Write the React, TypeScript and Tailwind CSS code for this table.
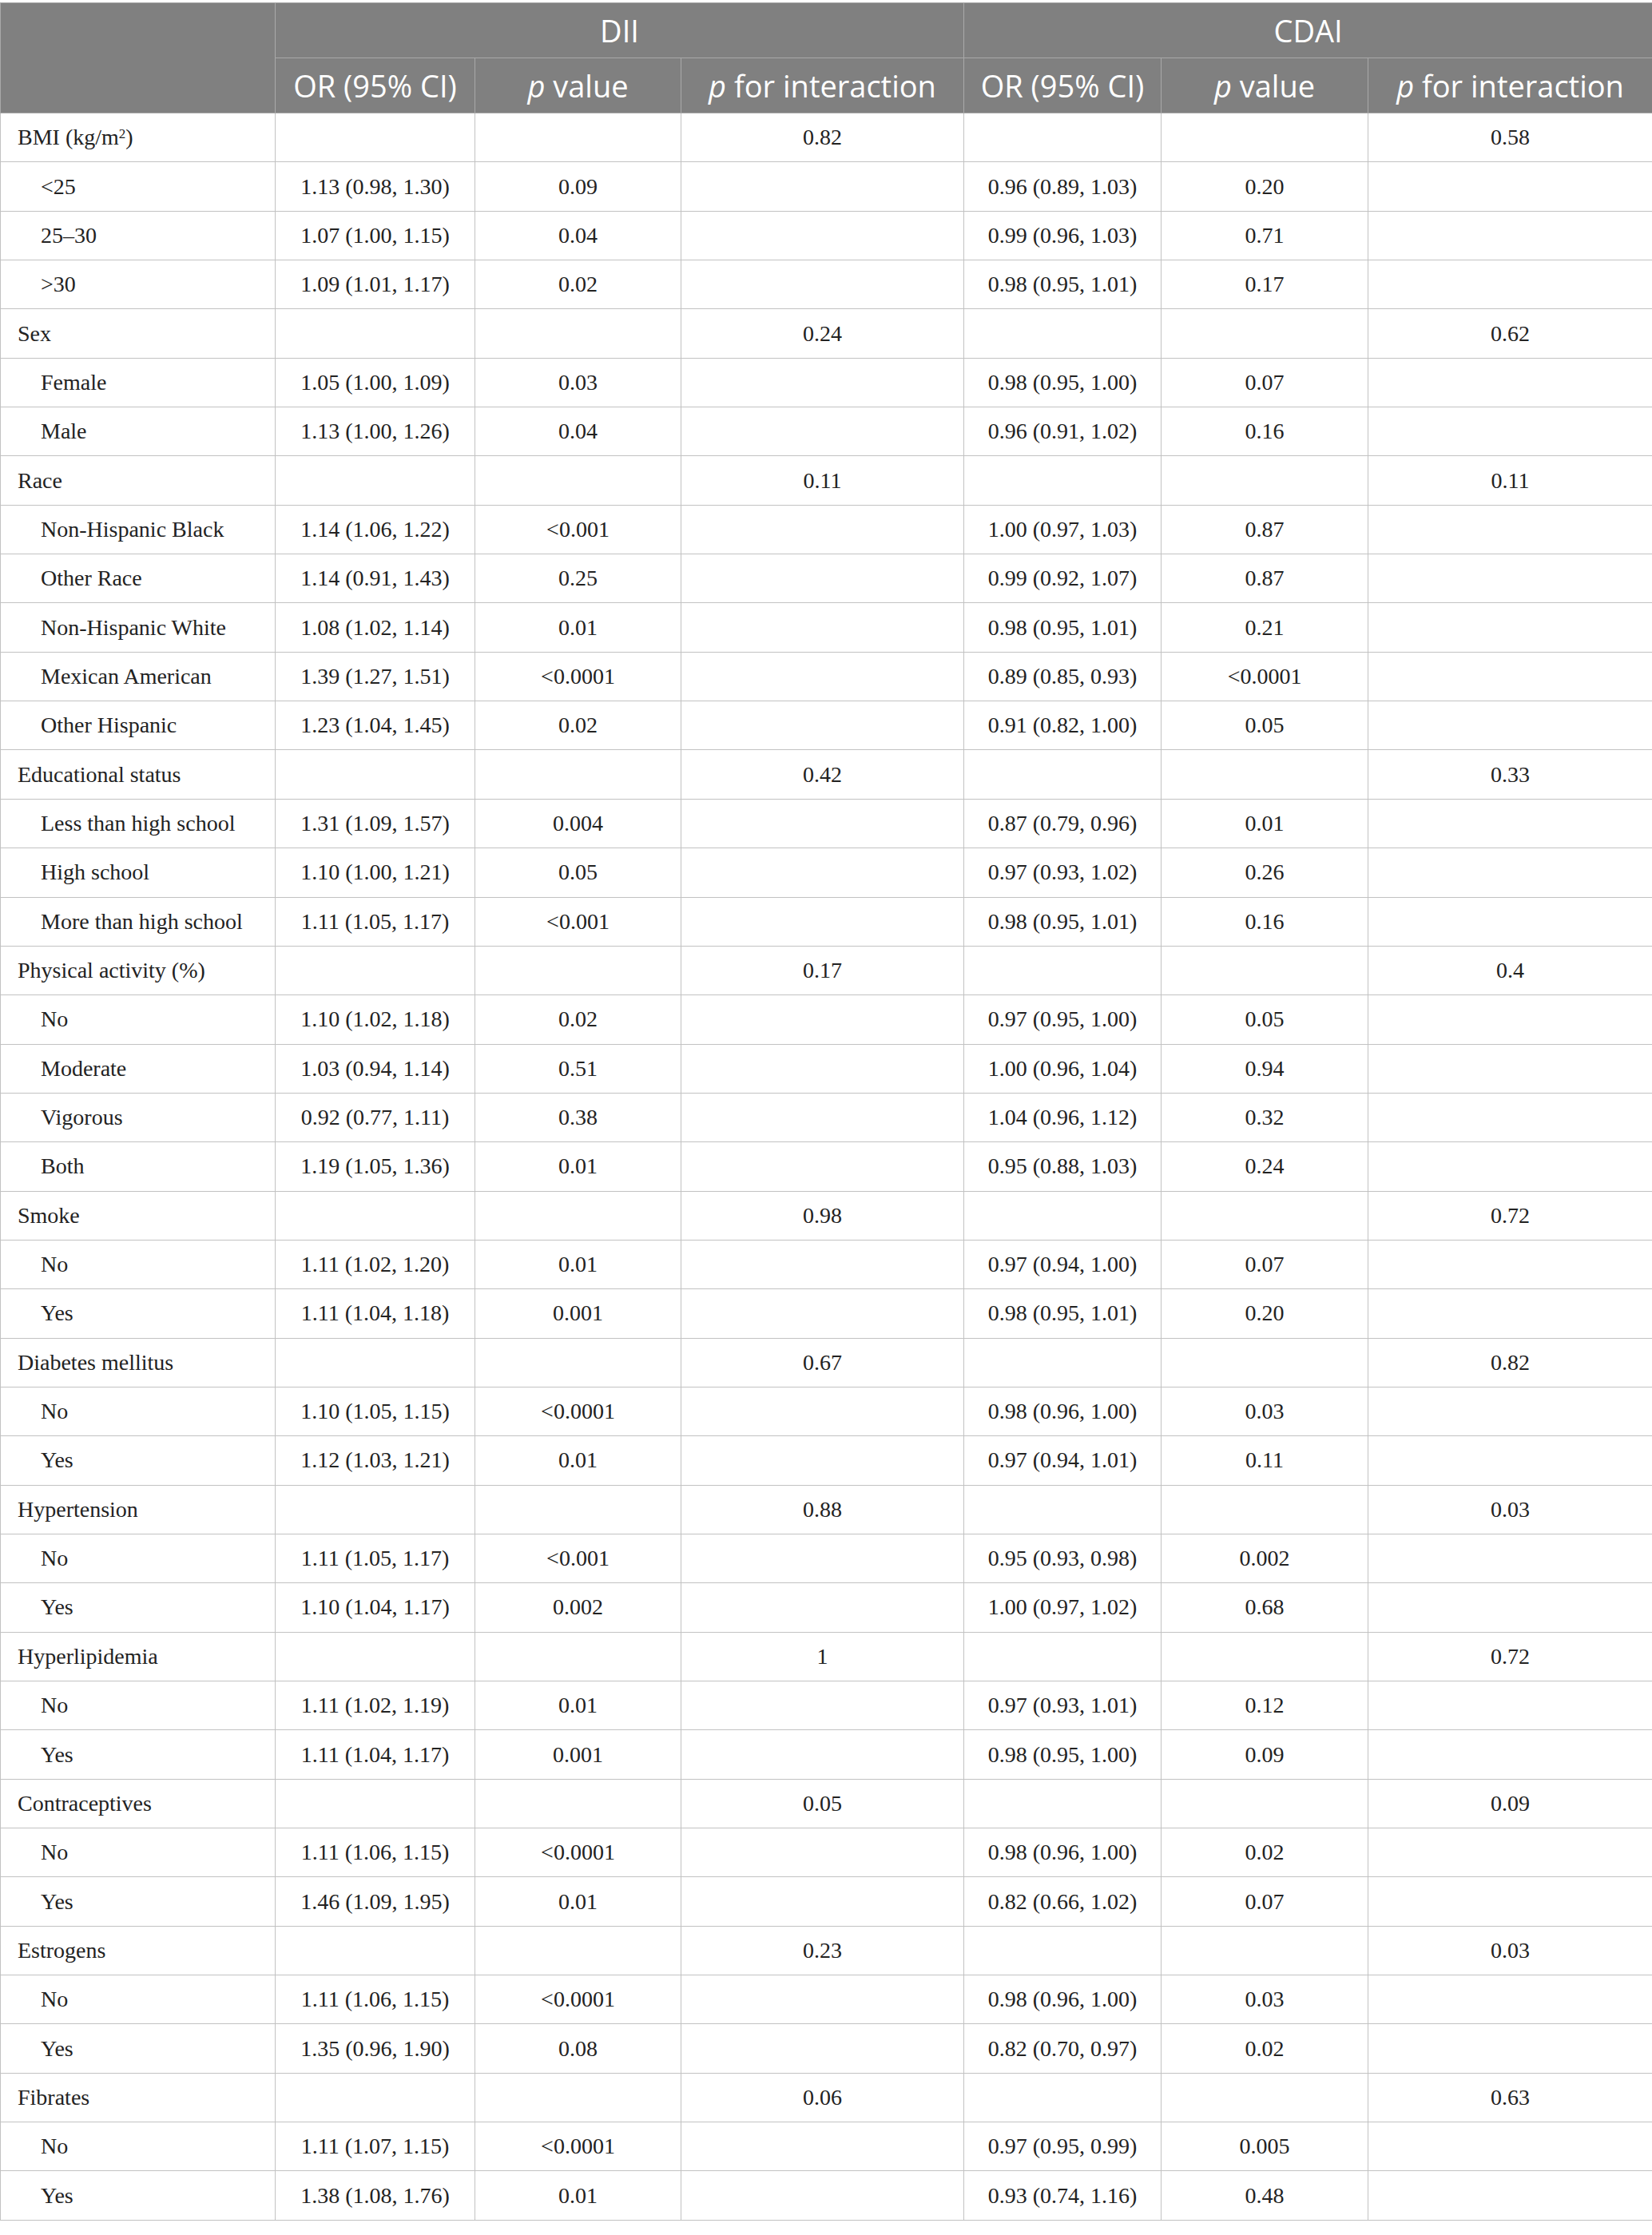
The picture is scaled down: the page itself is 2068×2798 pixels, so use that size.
const DATA: [string, boolean, string, string, string, string, string, string][] = [
  ["BMI", false, "", "", "0.82", "", "", "0.58"],
  ["<25", true, "1.13 (0.98, 1.30)", "0.09", "", "0.96 (0.89, 1.03)", "0.20", ""],
  ["25–30", true, "1.07 (1.00, 1.15)", "0.04", "", "0.99 (0.96, 1.03)", "0.71", ""],
  [">30", true, "1.09 (1.01, 1.17)", "0.02", "", "0.98 (0.95, 1.01)", "0.17", ""],
  ["Sex", false, "", "", "0.24", "", "", "0.62"],
  ["Female", true, "1.05 (1.00, 1.09)", "0.03", "", "0.98 (0.95, 1.00)", "0.07", ""],
  ["Male", true, "1.13 (1.00, 1.26)", "0.04", "", "0.96 (0.91, 1.02)", "0.16", ""],
  ["Race", false, "", "", "0.11", "", "", "0.11"],
  ["Non-Hispanic Black", true, "1.14 (1.06, 1.22)", "<0.001", "", "1.00 (0.97, 1.03)", "0.87", ""],
  ["Other Race", true, "1.14 (0.91, 1.43)", "0.25", "", "0.99 (0.92, 1.07)", "0.87", ""],
  ["Non-Hispanic White", true, "1.08 (1.02, 1.14)", "0.01", "", "0.98 (0.95, 1.01)", "0.21", ""],
  ["Mexican American", true, "1.39 (1.27, 1.51)", "<0.0001", "", "0.89 (0.85, 0.93)", "<0.0001", ""],
  ["Other Hispanic", true, "1.23 (1.04, 1.45)", "0.02", "", "0.91 (0.82, 1.00)", "0.05", ""],
  ["Educational status", false, "", "", "0.42", "", "", "0.33"],
  ["Less than high school", true, "1.31 (1.09, 1.57)", "0.004", "", "0.87 (0.79, 0.96)", "0.01", ""],
  ["High school", true, "1.10 (1.00, 1.21)", "0.05", "", "0.97 (0.93, 1.02)", "0.26", ""],
  ["More than high school", true, "1.11 (1.05, 1.17)", "<0.001", "", "0.98 (0.95, 1.01)", "0.16", ""],
  ["Physical activity (%)", false, "", "", "0.17", "", "", "0.4"],
  ["No", true, "1.10 (1.02, 1.18)", "0.02", "", "0.97 (0.95, 1.00)", "0.05", ""],
  ["Moderate", true, "1.03 (0.94, 1.14)", "0.51", "", "1.00 (0.96, 1.04)", "0.94", ""],
  ["Vigorous", true, "0.92 (0.77, 1.11)", "0.38", "", "1.04 (0.96, 1.12)", "0.32", ""],
  ["Both", true, "1.19 (1.05, 1.36)", "0.01", "", "0.95 (0.88, 1.03)", "0.24", ""],
  ["Smoke", false, "", "", "0.98", "", "", "0.72"],
  ["No", true, "1.11 (1.02, 1.20)", "0.01", "", "0.97 (0.94, 1.00)", "0.07", ""],
  ["Yes", true, "1.11 (1.04, 1.18)", "0.001", "", "0.98 (0.95, 1.01)", "0.20", ""],
  ["Diabetes mellitus", false, "", "", "0.67", "", "", "0.82"],
  ["No", true, "1.10 (1.05, 1.15)", "<0.0001", "", "0.98 (0.96, 1.00)", "0.03", ""],
  ["Yes", true, "1.12 (1.03, 1.21)", "0.01", "", "0.97 (0.94, 1.01)", "0.11", ""],
  ["Hypertension", false, "", "", "0.88", "", "", "0.03"],
  ["No", true, "1.11 (1.05, 1.17)", "<0.001", "", "0.95 (0.93, 0.98)", "0.002", ""],
  ["Yes", true, "1.10 (1.04, 1.17)", "0.002", "", "1.00 (0.97, 1.02)", "0.68", ""],
  ["Hyperlipidemia", false, "", "", "1", "", "", "0.72"],
  ["No", true, "1.11 (1.02, 1.19)", "0.01", "", "0.97 (0.93, 1.01)", "0.12", ""],
  ["Yes", true, "1.11 (1.04, 1.17)", "0.001", "", "0.98 (0.95, 1.00)", "0.09", ""],
  ["Contraceptives", false, "", "", "0.05", "", "", "0.09"],
  ["No", true, "1.11 (1.06, 1.15)", "<0.0001", "", "0.98 (0.96, 1.00)", "0.02", ""],
  ["Yes", true, "1.46 (1.09, 1.95)", "0.01", "", "0.82 (0.66, 1.02)", "0.07", ""],
  ["Estrogens", false, "", "", "0.23", "", "", "0.03"],
  ["No", true, "1.11 (1.06, 1.15)", "<0.0001", "", "0.98 (0.96, 1.00)", "0.03", ""],
  ["Yes", true, "1.35 (0.96, 1.90)", "0.08", "", "0.82 (0.70, 0.97)", "0.02", ""],
  ["Fibrates", false, "", "", "0.06", "", "", "0.63"],
  ["No", true, "1.11 (1.07, 1.15)", "<0.0001", "", "0.97 (0.95, 0.99)", "0.005", ""],
  ["Yes", true, "1.38 (1.08, 1.76)", "0.01", "", "0.93 (0.74, 1.16)", "0.48", ""],
];

const th = "border border-[#a9a9a9] bg-[#808080] text-white font-normal text-center";
const td = "border border-[#c2c2c2] text-center";

export default function App() {
  return (
    <div className="w-[2068px] bg-white pt-[3px]">
      <table
        className="w-[2068px] table-fixed border-collapse text-[28px] text-[#222]"
        style={{ fontFamily: '"Liberation Serif", "Times New Roman", serif' }}
      >
        <colgroup>
          <col className="w-[344px]" />
          <col className="w-[250px]" />
          <col className="w-[258px]" />
          <col className="w-[354px]" />
          <col className="w-[247px]" />
          <col className="w-[259px]" />
          <col className="w-[356px]" />
        </colgroup>
        <thead style={{ fontFamily: '"Open Sans", "Noto Sans", sans-serif' }} className="text-[38px]">
          <tr className="h-[69px]">
            <th rowSpan={2} className={th}></th>
            <th colSpan={3} className={th}>DII</th>
            <th colSpan={3} className={th}>CDAI</th>
          </tr>
          <tr className="h-[69px]">
            <th className={th}>OR (95% CI)</th>
            <th className={th}><i>p</i> value</th>
            <th className={th}><i>p</i> for interaction</th>
            <th className={th}>OR (95% CI)</th>
            <th className={th}><i>p</i> value</th>
            <th className={th}><i>p</i> for interaction</th>
          </tr>
        </thead>
        <tbody>
          {DATA.map((r, i) => (
            <tr key={i} className="h-[61.35px]">
              <td className={`border border-[#c2c2c2] text-left ${r[1] ? "pl-[50px]" : "pl-[21px]"}`}>
                {r[0] === "BMI" ? (
                  <>
                    BMI (kg/m<sup className="text-[17px]">2</sup>)
                  </>
                ) : (
                  r[0]
                )}
              </td>
              <td className={td}>{r[2]}</td>
              <td className={td}>{r[3]}</td>
              <td className={td}>{r[4]}</td>
              <td className={td}>{r[5]}</td>
              <td className={td}>{r[6]}</td>
              <td className={td}>{r[7]}</td>
            </tr>
          ))}
        </tbody>
      </table>
    </div>
  );
}
